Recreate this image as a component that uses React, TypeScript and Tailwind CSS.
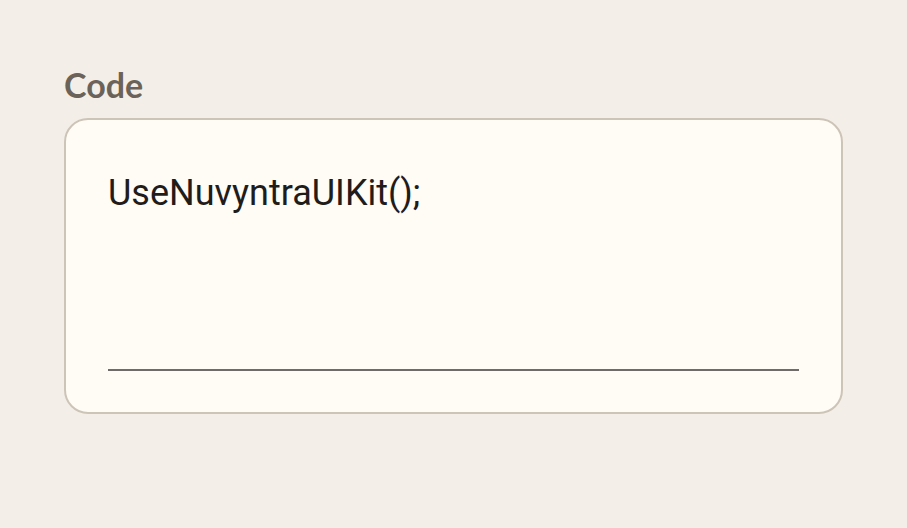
import React from 'react';

export default function App() {
  return (
    <div className="min-h-[528px] w-full bg-[#f3efe8] px-16 pt-[64px]">
      {/* Label */}
      <div className="text-[34px] font-bold leading-[42px] text-[#6b6359] font-['Lato',sans-serif]">
        Code
      </div>

      {/* Code field */}
      <div className="mt-[12px] rounded-3xl border-2 border-[#cdc4b8] bg-[#fffbf5] px-[42px] pt-[42px] pb-[41px]">
        <div className="h-[209px] border-b-2 border-[#6e6b68] pt-[10px]">
          <p className="text-[36px] leading-[42px] text-[#1f1c1a] font-['Roboto',sans-serif]">
            UseNuvyntraUIKit();
          </p>
        </div>
      </div>
    </div>
  );
}
